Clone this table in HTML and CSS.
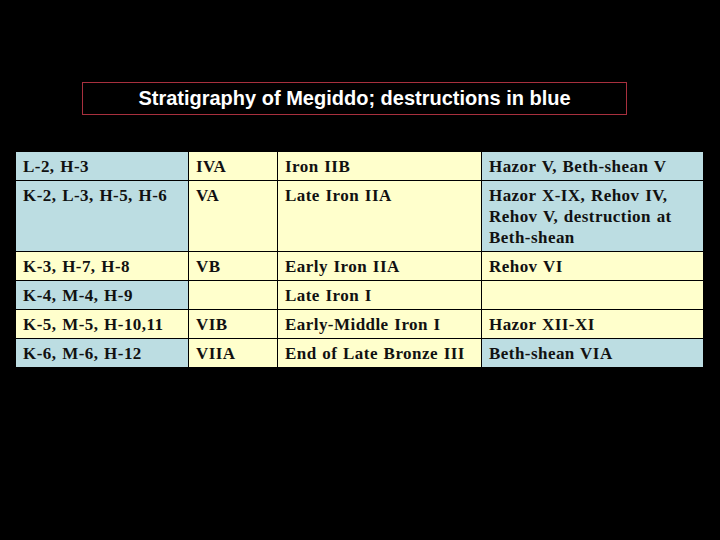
FILE: index.html
```html
<!DOCTYPE html>
<html>
<head>
<meta charset="utf-8">
<link rel="stylesheet" href="styles.css">
</head>
<body>
<div class="slide">
  <div class="title">Stratigraphy of Megiddo; destructions in blue</div>
  <table class="strat">
    <colgroup>
      <col class="c1"><col class="c2"><col class="c3"><col class="c4">
    </colgroup>
    <tr>
      <td class="blue">L-2, H-3</td>
      <td class="yel">IVA</td>
      <td class="yel">Iron IIB</td>
      <td class="blue">Hazor V, Beth-shean V</td>
    </tr>
    <tr class="tall">
      <td class="blue">K-2, L-3, H-5, H-6</td>
      <td class="yel">VA</td>
      <td class="yel">Late Iron IIA</td>
      <td class="blue">Hazor X-IX, Rehov IV,<br>Rehov V, destruction at<br>Beth-shean</td>
    </tr>
    <tr>
      <td class="yel">K-3, H-7, H-8</td>
      <td class="yel">VB</td>
      <td class="yel">Early Iron IIA</td>
      <td class="yel">Rehov VI</td>
    </tr>
    <tr>
      <td class="blue">K-4, M-4, H-9</td>
      <td class="yel"></td>
      <td class="yel">Late Iron I</td>
      <td class="yel"></td>
    </tr>
    <tr>
      <td class="yel">K-5, M-5, H-10,11</td>
      <td class="yel">VIB</td>
      <td class="yel">Early-Middle Iron I</td>
      <td class="yel">Hazor XII-XI</td>
    </tr>
    <tr>
      <td class="blue">K-6, M-6, H-12</td>
      <td class="yel">VIIA</td>
      <td class="yel">End of Late Bronze III</td>
      <td class="blue">Beth-shean VIA</td>
    </tr>
  </table>
</div>
</body>
</html>
```
FILE: styles.css
```css
html, body {
  margin: 0;
  padding: 0;
  background: #000;
}
.slide {
  width: 720px;
  height: 540px;
  background: #000;
  padding-top: 82px;
  box-sizing: border-box;
}
.title {
  margin-left: 82px;
  width: 543px;
  height: 31px;
  border: 1px solid #a8303e;
  color: #fff;
  font-family: "Liberation Sans", Arial, sans-serif;
  font-weight: bold;
  font-size: 20px;
  line-height: 31px;
  text-align: center;
}
.strat {
  margin-top: 36px;
  margin-left: 15px;
  width: 688px;
  border-collapse: collapse;
  table-layout: fixed;
  font-family: "Liberation Serif", "Times New Roman", serif;
  font-weight: bold;
  font-size: 17px;
  letter-spacing: 0.45px;
  word-spacing: 1px;
  line-height: 21px;
  color: #111;
}
.c1 { width: 173px; }
.c2 { width: 89px; }
.c3 { width: 204px; }
.c4 { width: 222px; }
.strat td {
  border: 1px solid #000;
  padding: 4px 4px 3px 7px;
  vertical-align: top;
  height: 21px;
}
.blue { background: #bcdde2; }
.yel { background: #ffffcc; }
```
